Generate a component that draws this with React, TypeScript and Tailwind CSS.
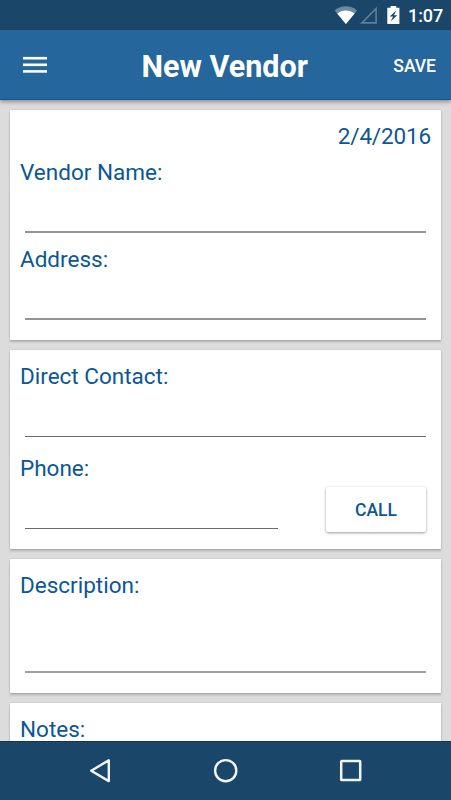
import type { ReactNode } from 'react';

function Card({ className, children }: { className: string; children?: ReactNode }) {
  return (
    <section
      className={`mx-[10px] shrink-0 bg-white px-[10px] shadow-[0_2px_2px_rgba(0,0,0,0.2),0_0_1px_rgba(0,0,0,0.25)] ${className}`}
    >
      {children}
    </section>
  );
}

function Label({ children }: { children: ReactNode }) {
  return <div className="h-[26px] text-[22.5px] leading-[26px] whitespace-nowrap">{children}</div>;
}

function StatusBar() {
  return (
    <div className="flex h-[30px] shrink-0 items-center bg-[#1a4669] pl-[334px] text-white">
      <svg width="70" height="30" viewBox="0 0 70 30" className="shrink-0">
        <path d="M.7 10.4C7.2 4.9 16.6 4.9 23.1 10.4L11.9 24Z" fill="#6b8aa2" />
        <path d="M3.2 13.4C8.3 9.5 15.5 9.5 20.6 13.4L11.9 24Z" fill="#fff" />
        <path d="M27.9 22.9H42.1V8.4Z" fill="none" stroke="#5f7f98" strokeWidth="1.6" />
        <path d="M56.6 6h5.6v1.8h3.2v16.2H53.3V7.8h3.3Z" fill="#fff" />
        <path d="M62.4 10.2L55.8 16.5h3.3L56.6 21.6l6.6-6.4h-3.3Z" fill="#1a4669" />
      </svg>
      <span className="ml-[4px] pt-px text-[18px] font-medium leading-[30px] tracking-[-0.1px]">1:07</span>
    </div>
  );
}

export default function App() {
  return (
    <div className="flex h-[800px] w-[451px] flex-col overflow-hidden bg-[#dcdcdc] font-['Roboto','Liberation_Sans',sans-serif] text-[#0b5796]">
      <StatusBar />
      <header className="z-10 flex h-[70px] shrink-0 items-center border-b border-[#105990] bg-[#25679c] pl-[23px] pr-[15px] text-white shadow-[0_2px_4px_rgba(0,0,0,0.35)]">
        <button className="w-[24px] pt-px" aria-label="Menu">
          <svg width="24" height="18" viewBox="0 0 24 18" className="block" fill="#fff">
            <rect y="0.9" width="24" height="2.6" />
            <rect y="7.5" width="24" height="2.6" />
            <rect y="14.1" width="24" height="2.6" />
          </svg>
        </button>
        <h1 className="ml-[94.5px] pt-[4px] text-[30.5px] leading-[36px] font-bold whitespace-nowrap">New Vendor</h1>
        <button className="ml-auto pt-[3px] text-right text-[17.5px] font-medium">SAVE</button>
      </header>

      <main className="flex min-h-0 flex-1 flex-col gap-[10px] overflow-hidden pt-[10px]">
        <Card className="h-[230px]">
          <div className="flex h-[49px] justify-end pt-[13px] tracking-[-0.15px]">
            <Label>2/4/2016</Label>
          </div>
          <Label>Vendor Name:</Label>
          <div className="mx-[5px] mt-[46px] h-[2px] bg-[#949494]" />
          <div className="pt-[13px]">
            <Label>Address:</Label>
          </div>
          <div className="mx-[5px] mt-[46px] h-[2px] bg-[#949494]" />
        </Card>

        <Card className="h-[199px]">
          <div className="pt-[13px]">
            <Label>Direct Contact:</Label>
          </div>
          <div className="mx-[5px] mt-[47px] h-px bg-[#6a6a6a]" />
          <div className="flex justify-between">
            <div className="pt-[18px]">
              <Label>Phone:</Label>
              <div className="ml-[5px] mt-[47px] h-px w-[253px] bg-[#6a6a6a]" />
            </div>
            <button className="mr-[5px] mt-[50px] h-[45px] w-[100px] rounded-[2px] bg-white pt-px text-[17.5px] font-medium shadow-[0_1px_3px_rgba(0,0,0,0.4)]">
              CALL
            </button>
          </div>
        </Card>

        <Card className="h-[134px]">
          <div className="pt-[13px]">
            <Label>Description:</Label>
          </div>
          <div className="mx-[5px] mt-[73px] h-[2px] bg-[#a0a0a0]" />
        </Card>

        <Card className="h-[38px]">
          <div className="pt-[13px]">
            <Label>Notes:</Label>
          </div>
        </Card>
      </main>

      <nav className="z-10 flex h-[59px] shrink-0 items-center justify-between border-t border-[#0d3554] bg-[#1a4669] pl-[88px] pr-[88px]">
        <svg width="24" height="26" viewBox="0 0 24 26">
          <path d="M3.2 12.7L20.8 2.3V23.1Z" fill="none" stroke="#f2f4f6" strokeWidth="2.4" strokeLinejoin="round" />
        </svg>
        <svg width="26" height="26" viewBox="0 0 26 26">
          <circle cx="12.7" cy="12.7" r="10.6" fill="none" stroke="#f2f4f6" strokeWidth="2.4" />
        </svg>
        <svg width="24" height="26" viewBox="0 0 24 26">
          <rect x="2.2" y="3.1" width="19" height="19" rx="0.6" fill="none" stroke="#f2f4f6" strokeWidth="2.5" />
        </svg>
      </nav>
    </div>
  );
}
